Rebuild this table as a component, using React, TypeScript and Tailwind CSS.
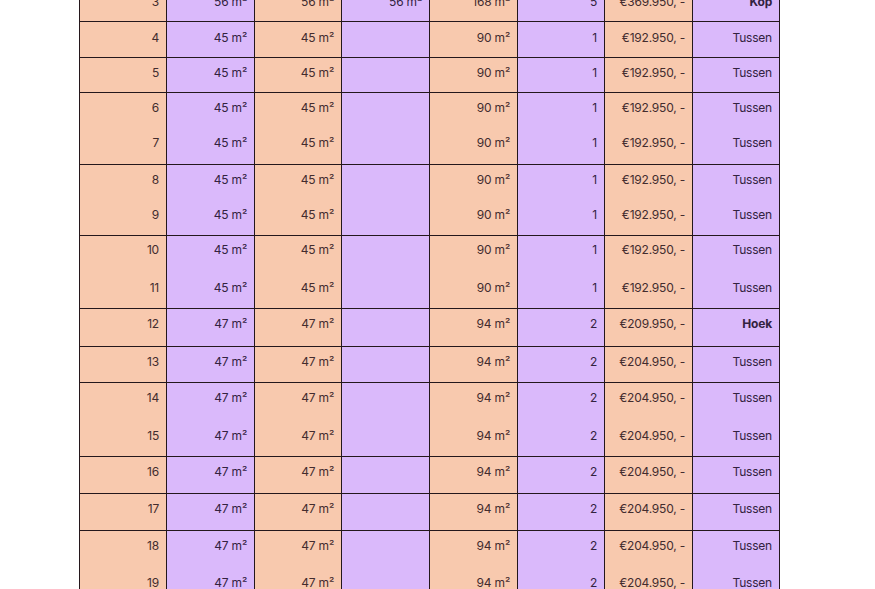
import React from "react";

type Unit = {
  nr: string;
  a: string;
  b: string;
  c: string;
  total: string;
  rooms: string;
  price: string;
  type: string;
  bold?: boolean;
};

type Group = {
  height: string;
  first: string;
  gap: string;
  units: Unit[];
};

const tussen = (nr: string, m: string, t: string, rooms: string, price: string): Unit => ({
  nr,
  a: m,
  b: m,
  c: "",
  total: t,
  rooms,
  price,
  type: "Tussen",
});

const groups: Group[] = [
  {
    height: "h-[36px]",
    first: "pt-[9px]",
    gap: "",
    units: [
      { nr: "3", a: "56 m²", b: "56 m²", c: "56 m²", total: "168 m²", rooms: "5", price: "€369.950, -", type: "Kop", bold: true },
    ],
  },
  { height: "h-[36px]", first: "pt-[9px]", gap: "", units: [tussen("4", "45 m²", "90 m²", "1", "€192.950, -")] },
  { height: "h-[35px]", first: "pt-[8px]", gap: "", units: [tussen("5", "45 m²", "90 m²", "1", "€192.950, -")] },
  {
    height: "h-[72px]",
    first: "pt-[8px]",
    gap: "mt-[21px]",
    units: [tussen("6", "45 m²", "90 m²", "1", "€192.950, -"), tussen("7", "45 m²", "90 m²", "1", "€192.950, -")],
  },
  {
    height: "h-[71px]",
    first: "pt-[8px]",
    gap: "mt-[21px]",
    units: [tussen("8", "45 m²", "90 m²", "1", "€192.950, -"), tussen("9", "45 m²", "90 m²", "1", "€192.950, -")],
  },
  {
    height: "h-[73px]",
    first: "pt-[7px]",
    gap: "mt-[24px]",
    units: [tussen("10", "45 m²", "90 m²", "1", "€192.950, -"), tussen("11", "45 m²", "90 m²", "1", "€192.950, -")],
  },
  {
    height: "h-[38px]",
    first: "pt-[8px]",
    gap: "",
    units: [{ ...tussen("12", "47 m²", "94 m²", "2", "€209.950, -"), type: "Hoek", bold: true }],
  },
  { height: "h-[36px]", first: "pt-[8px]", gap: "", units: [tussen("13", "47 m²", "94 m²", "2", "€204.950, -")] },
  {
    height: "h-[74px]",
    first: "pt-[8px]",
    gap: "mt-[24px]",
    units: [tussen("14", "47 m²", "94 m²", "2", "€204.950, -"), tussen("15", "47 m²", "94 m²", "2", "€204.950, -")],
  },
  { height: "h-[37px]", first: "pt-[8px]", gap: "", units: [tussen("16", "47 m²", "94 m²", "2", "€204.950, -")] },
  { height: "h-[37px]", first: "pt-[8px]", gap: "", units: [tussen("17", "47 m²", "94 m²", "2", "€204.950, -")] },
  {
    height: "h-[74px]",
    first: "pt-[8px]",
    gap: "mt-[23px]",
    units: [tussen("18", "47 m²", "94 m²", "2", "€204.950, -"), tussen("19", "47 m²", "94 m²", "2", "€204.950, -")],
  },
];

const columns: { key: keyof Unit; bg: string; text: string }[] = [
  { key: "nr", bg: "bg-[#f8c9ae]", text: "text-[#432c2e]" },
  { key: "a", bg: "bg-[#dab9fb]", text: "text-[#33223f]" },
  { key: "b", bg: "bg-[#f8c9ae]", text: "text-[#432c2e]" },
  { key: "c", bg: "bg-[#dab9fb]", text: "text-[#33223f]" },
  { key: "total", bg: "bg-[#f8c9ae]", text: "text-[#432c2e]" },
  { key: "rooms", bg: "bg-[#dab9fb]", text: "text-[#33223f]" },
  { key: "price", bg: "bg-[#f8c9ae]", text: "text-[#432c2e]" },
  { key: "type", bg: "bg-[#dab9fb]", text: "text-[#33223f]" },
];

export default function App() {
  return (
    <div className="h-[589px] w-full overflow-hidden bg-white font-['Inter',sans-serif] text-[12px]">
      <div className="ml-[79px] mt-[-14px] w-[701px] border-l border-[#24171c]">
        {groups.map((g, gi) => (
          <div
            key={gi}
            className={`grid grid-cols-[87px_88px_87px_88px_88px_87px_88px_87px] border-b border-[#24171c] ${g.height}`}
          >
            {columns.map((col) => (
              <div key={col.key} className={`border-r border-[#24171c] pr-[7px] text-right ${col.bg} ${col.text} ${g.first}`}>
                {g.units.map((u, ui) => (
                  <div
                    key={ui}
                    className={`leading-[14px] tracking-[-0.2px] ${ui > 0 ? g.gap : ""} ${
                      col.key === "type" && u.bold ? "font-bold" : ""
                    }`}
                  >
                    {u[col.key] as string}
                  </div>
                ))}
              </div>
            ))}
          </div>
        ))}
      </div>
    </div>
  );
}
